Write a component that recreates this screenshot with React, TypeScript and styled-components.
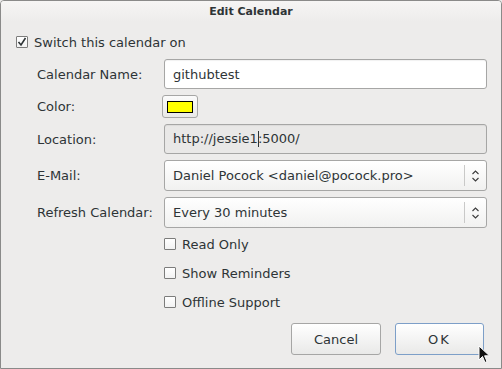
import React from 'react'
import styled, { createGlobalStyle } from 'styled-components'

const GlobalStyle = createGlobalStyle`
  html, body {
    margin: 0;
    padding: 0;
    background: #edeceb;
  }
  body {
    font-family: 'DejaVu Sans', 'Liberation Sans', sans-serif;
    font-size: 13px;
    color: #2e3436;
  }
`

const Window = styled.div`
  position: relative;
  box-sizing: border-box;
  width: 502px;
  height: 369px;
  border: 1px solid #8a8a89;
  border-radius: 4px 4px 0 0;
  background: #edeceb;
  overflow: hidden;
`
const TitleBar = styled.div`
  height: 21px;
  display: flex;
  align-items: center;
  justify-content: center;
  background: linear-gradient(#f6f5f4, #edeceb);
  font-weight: bold;
  font-size: 11px;
  color: #2e3436;
`
const Body = styled.div`
  padding: 10px 15px 0 15px;
`
const CheckRow = styled.label`
  display: flex;
  align-items: center;
  gap: 6px;
  height: 20px;
`
const Box = styled.span`
  box-sizing: border-box;
  width: 12px;
  height: 12px;
  border: 1px solid #7c7c7b;
  border-radius: 1px;
  background: linear-gradient(#ffffff, #f2f2f2);
  display: flex;
  align-items: center;
  justify-content: center;
`
const Form = styled.div`
  display: grid;
  grid-template-columns: 127px 323px;
  row-gap: 6px;
  align-items: center;
  padding-left: 21px;
  margin-top: 7px;
`
const Label = styled.span`
  white-space: nowrap;
`
const Entry = styled.div<{ $readonly?: boolean }>`
  box-sizing: border-box;
  height: 30px;
  border: 1px solid #a6a6a5;
  border-radius: 3px;
  background: ${({ $readonly }) => ($readonly ? '#e9e8e7' : '#ffffff')};
  box-shadow: inset 0 1px 1px rgba(0, 0, 0, 0.06);
  display: flex;
  align-items: center;
  padding-left: 8px;
`
const Caret = styled.span`
  display: inline-block;
  width: 1px;
  height: 16px;
  background: #2e3436;
  margin-right: -1px;
  vertical-align: middle;
`
const ColorButton = styled.div`
  box-sizing: border-box;
  width: 36px;
  height: 23px;
  margin-left: -2px;
  border: 1px solid #a6a6a5;
  border-radius: 3px;
  background: linear-gradient(#fbfbfb, #e9e9e8);
  display: flex;
  align-items: center;
  justify-content: center;
`
const Swatch = styled.span<{ $color: string }>`
  box-sizing: border-box;
  width: 26px;
  height: 12px;
  border: 1px solid #000;
  background: ${({ $color }) => $color};
`
const Combo = styled.div`
  box-sizing: border-box;
  height: 31px;
  border: 1px solid #a6a6a5;
  border-radius: 3px;
  background: linear-gradient(#ffffff, #f1f1f0);
  display: flex;
  align-items: center;
`
const ComboText = styled.span`
  flex: 1;
  padding-left: 8px;
  white-space: nowrap;
`
const ComboSep = styled.span`
  width: 1px;
  height: 21px;
  background: #c9c9c8;
`
const ComboArrow = styled.span`
  width: 21px;
  display: flex;
  justify-content: center;
`
const Options = styled.div`
  margin-top: 6px;
  padding-left: 148px;
  display: flex;
  flex-direction: column;
  gap: 9px;
`
const Buttons = styled.div`
  display: flex;
  justify-content: flex-end;
  gap: 14px;
  margin-top: 11px;
  padding-right: 2px;
`
const Button = styled.div<{ $focused?: boolean }>`
  box-sizing: border-box;
  width: ${({ $focused }) => ($focused ? 89 : 90)}px;
  height: 32px;
  border: 1px solid ${({ $focused }) => ($focused ? '#7d9fc8' : '#a6a6a5')};
  border-radius: 3px;
  background: linear-gradient(#ffffff, #e9e9e8);
  display: flex;
  align-items: center;
  justify-content: center;
  letter-spacing: ${({ $focused }) => ($focused ? '2px' : '0')};
`
const Pointer = styled.svg`
  position: absolute;
  left: 477px;
  top: 344px;
`

const CheckMark = () => (
  <svg width="10" height="10" viewBox="0 0 10 10">
    <path d="M1.5 5 L4 8 L8.5 1" fill="none" stroke="#2e3436" strokeWidth="1.6" />
  </svg>
)

const Arrows = () => (
  <svg width="7" height="12" viewBox="0 0 7 12">
    <path d="M0.5 4 L3.5 1 L6.5 4 M0.5 8 L3.5 11 L6.5 8" fill="none" stroke="#3c3c3c" strokeWidth="1.1" />
  </svg>
)

const Check = ({ checked, label }: { checked?: boolean; label: string }) => (
  <CheckRow>
    <Box>{checked && <CheckMark />}</Box>
    {label}
  </CheckRow>
)

const App = () => {
  return (
    <>
      <GlobalStyle />
      <Window>
        <TitleBar>Edit Calendar</TitleBar>
        <Body>
          <Check checked label="Switch this calendar on" />
          <Form>
            <Label>Calendar Name:</Label>
            <Entry>githubtest</Entry>
            <Label>Color:</Label>
            <div>
              <ColorButton>
                <Swatch $color="#ffff00" />
              </ColorButton>
            </div>
            <Label>Location:</Label>
            <Entry $readonly>
              <span>
                http://jessie1<Caret />:5000/
              </span>
            </Entry>
            <Label>E-Mail:</Label>
            <Combo>
              <ComboText>Daniel Pocock &lt;daniel@pocock.pro&gt;</ComboText>
              <ComboSep />
              <ComboArrow>
                <Arrows />
              </ComboArrow>
            </Combo>
            <Label>Refresh Calendar:</Label>
            <Combo>
              <ComboText>Every 30 minutes</ComboText>
              <ComboSep />
              <ComboArrow>
                <Arrows />
              </ComboArrow>
            </Combo>
          </Form>
          <Options>
            <Check label="Read Only" />
            <Check label="Show Reminders" />
            <Check label="Offline Support" />
          </Options>
          <Buttons>
            <Button>Cancel</Button>
            <Button $focused>OK</Button>
          </Buttons>
        </Body>
        <Pointer width="13" height="20" viewBox="0 0 13 20">
          <path d="M1 1 L1 15 L4.5 11.5 L7 17.5 L9 16.5 L6.6 10.8 L11.5 10.8 Z" fill="#111" stroke="#fff" strokeWidth="1" />
        </Pointer>
      </Window>
    </>
  )
}

export default App
